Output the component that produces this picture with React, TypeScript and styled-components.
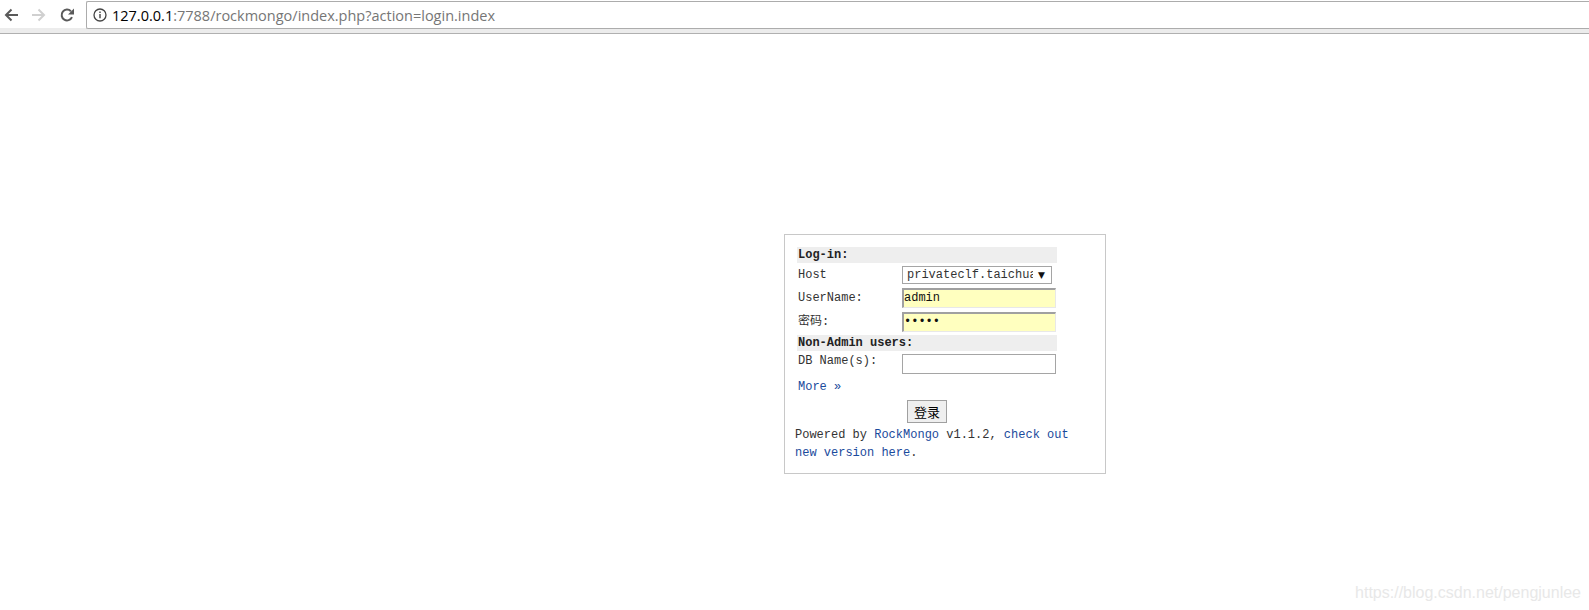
import React from "react";
import styled, { createGlobalStyle } from "styled-components";

const GlobalStyle = createGlobalStyle`
  html, body {
    margin: 0;
    padding: 0;
    background: #fff;
  }
`;

const Page = styled.div`
  width: 1589px;
  height: 610px;
  overflow: hidden;
`;

const Toolbar = styled.div`
  display: flex;
  align-items: flex-start;
  height: 28px;
  padding: 1px 0 0 4px;
  box-sizing: border-box;
  background: #fff;
`;

const NavButton = styled.button`
  display: flex;
  align-items: center;
  justify-content: center;
  width: 14px;
  height: 27px;
  margin-right: 14px;
  padding: 0;
  border: none;
  background: none;
  color: ${({ disabled }) => (disabled ? "#d0d0d0" : "#5a5a5a")};
`;

const AddressBar = styled.div`
  flex: 1;
  display: flex;
  align-items: center;
  gap: 5px;
  height: 28px;
  margin-left: -2px;
  padding-left: 6px;
  box-sizing: border-box;
  border: 1px solid #acacac;
  border-right: none;
  border-radius: 2px 0 0 2px;
  font-family: "Open Sans", "Noto Sans", sans-serif;
  font-size: 14.5px;
  color: #767676;
  white-space: nowrap;
`;

const Host = styled.span`
  color: #000;
`;

const ToolbarEdge = styled.div`
  height: 5px;
  background: #ececec;
  border-bottom: 1px solid #b0b0b0;
`;

const Main = styled.div`
  padding: 200px 0 0 784px;
  position: relative;
  font-family: "Liberation Mono", "Noto Sans CJK SC", monospace;
  font-size: 12px;
  color: #333;
`;

const LoginBox = styled.form`
  width: 322px;
  height: 240px;
  box-sizing: border-box;
  border: 1px solid #c8c8c8;
  padding: 12px 0 0 12px;
`;

const SectionTitle = styled.div`
  width: 260px;
  height: 16px;
  line-height: 16px;
  padding-left: 1px;
  box-sizing: border-box;
  background: #eee;
  font-weight: bold;
  color: #222;
`;

const Row = styled.div<{ $top: number; $alignTop?: boolean }>`
  display: grid;
  grid-template-columns: 104px auto;
  align-items: ${({ $alignTop }) => ($alignTop ? "start" : "center")};
  align-content: start;
  justify-content: start;
  height: 24px;
  box-sizing: border-box;
  padding: ${({ $top }) => $top}px 0 0 1px;
`;

const Label = styled.span`
  line-height: 14px;
`;

const SelectWrap = styled.div`
  position: relative;
  width: 150px;
  height: 18px;
`;

const HostSelect = styled.select`
  appearance: none;
  display: block;
  width: 100%;
  height: 100%;
  box-sizing: border-box;
  padding: 0 18px 0 4px;
  border: 1px solid #a5a5a5;
  border-radius: 0;
  background: #fff;
  font: inherit;
  color: #333;
`;

const SelectArrow = styled.span`
  position: absolute;
  right: 7px;
  top: 2px;
  font-size: 9px;
  line-height: 14px;
  color: #111;
  font-family: "DejaVu Sans", sans-serif;
`;

const TextField = styled.input<{ $filled?: boolean }>`
  display: block;
  width: 154px;
  height: 20px;
  box-sizing: border-box;
  padding: 0 0 2px;
  border: 1px solid #a5a5a5;
  border-radius: 0;
  outline: none;
  font: inherit;
  color: #111;
  background: ${({ $filled }) => ($filled ? "#ffffbf" : "#fff")};
  ${({ $filled }) =>
    $filled &&
    `
    border-width: 2px 1px 1px 2px;
    border-color: #a0a0a0 #e8e8e8 #e8e8e8 #a0a0a0;
  `}
`;

const MoreLine = styled.div`
  height: 24px;
  line-height: 24px;
  padding-left: 1px;
`;

const Link = styled.a`
  color: #1a4a9c;
  text-decoration: none;
`;

const ButtonRow = styled.div`
  height: 26px;
  padding: 1px 0 0 110px;
`;

const SubmitButton = styled.button`
  display: block;
  width: 40px;
  height: 23px;
  padding: 0;
  box-sizing: border-box;
  border: 1px solid #a0a0a0;
  background: #efefef;
  font-family: "Noto Sans CJK SC", sans-serif;
  font-size: 13px;
  line-height: 19px;
  color: #000;
`;

const Footer = styled.div`
  width: 290px;
  margin-left: -2px;
  line-height: 18px;
`;

const Watermark = styled.div`
  position: absolute;
  right: 8px;
  top: 550px;
  font-family: "Liberation Sans", sans-serif;
  font-size: 16px;
  color: #e8e8e8;
  white-space: nowrap;
`;

const App: React.FC = () => {
  return (
    <Page>
      <GlobalStyle />
      <Toolbar>
        <NavButton aria-label="back">
          <svg width="14" height="14" viewBox="0 0 14 14" fill="none" stroke="currentColor" strokeWidth="2">
            <path d="M14 7H2M7.5 1.5 2 7l5.5 5.5" />
          </svg>
        </NavButton>
        <NavButton aria-label="forward" disabled>
          <svg width="14" height="14" viewBox="0 0 14 14" fill="none" stroke="currentColor" strokeWidth="2">
            <path d="M0 7h12M6.5 1.5 12 7l-5.5 5.5" />
          </svg>
        </NavButton>
        <NavButton aria-label="reload">
          <svg width="14" height="14" viewBox="0 0 14 14" fill="none">
            <path d="M12 9.2A5.4 5.4 0 1 1 10.9 3.2" stroke="currentColor" strokeWidth="2" />
            <path d="M14 0.5v6H8z" fill="currentColor" />
          </svg>
        </NavButton>
        <AddressBar>
          <svg width="14" height="14" viewBox="0 0 14 14" fill="none" stroke="#444">
            <circle cx="7" cy="7" r="6" strokeWidth="1.3" />
            <path d="M7 6v4.2M7 3.6v1.4" strokeWidth="1.4" />
          </svg>
          <span>
            <Host>127.0.0.1</Host>:7788/rockmongo/index.php?action=login.index
          </span>
        </AddressBar>
      </Toolbar>
      <ToolbarEdge />
      <Main>
        <LoginBox>
          <SectionTitle>Log-in:</SectionTitle>
          <Row $top={3}>
            <Label>Host</Label>
            <SelectWrap>
              <HostSelect defaultValue="privateclf">
                <option value="privateclf">privateclf.taichuan</option>
              </HostSelect>
              <SelectArrow>▼</SelectArrow>
            </SelectWrap>
          </Row>
          <Row $top={1}>
            <Label>UserName:</Label>
            <TextField $filled defaultValue="admin" />
          </Row>
          <Row $top={1}>
            <Label>密码:</Label>
            <TextField $filled type="password" defaultValue="admin" />
          </Row>
          <SectionTitle>Non-Admin users:</SectionTitle>
          <Row $top={3} $alignTop>
            <Label>DB Name(s):</Label>
            <TextField />
          </Row>
          <MoreLine>
            <Link href="#">More »</Link>
          </MoreLine>
          <ButtonRow>
            <SubmitButton type="button">登录</SubmitButton>
          </ButtonRow>
          <Footer>
            Powered by <Link href="#">RockMongo</Link> v1.1.2, <Link href="#">check out new version here</Link>.
          </Footer>
        </LoginBox>
        <Watermark>https://blog.csdn.net/pengjunlee</Watermark>
      </Main>
    </Page>
  );
};

export default App;
